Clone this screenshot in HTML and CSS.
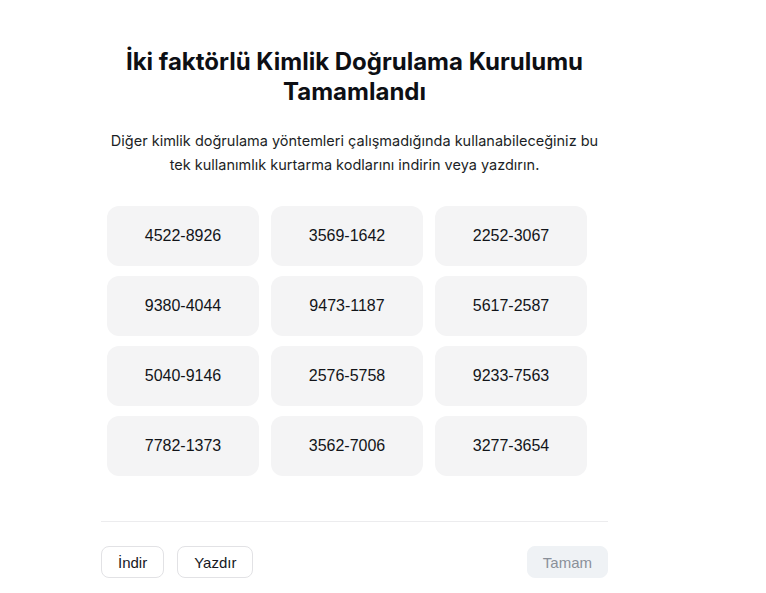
FILE: index.html
```html
<!DOCTYPE html>
<html lang="tr">
<head>
<meta charset="utf-8">
<link rel="stylesheet" href="styles.css">
</head>
<body>
<div class="panel">
  <h1 class="title">İki faktörlü Kimlik Doğrulama Kurulumu Tamamlandı</h1>
  <p class="desc">Diğer kimlik doğrulama yöntemleri çalışmadığında kullanabileceğiniz bu tek kullanımlık kurtarma kodlarını indirin veya yazdırın.</p>
  <div class="codes">
    <div class="code">4522-8926</div>
    <div class="code">3569-1642</div>
    <div class="code">2252-3067</div>
    <div class="code">9380-4044</div>
    <div class="code">9473-1187</div>
    <div class="code">5617-2587</div>
    <div class="code">5040-9146</div>
    <div class="code">2576-5758</div>
    <div class="code">9233-7563</div>
    <div class="code">7782-1373</div>
    <div class="code">3562-7006</div>
    <div class="code">3277-3654</div>
  </div>
  <div class="footer">
    <div class="left-actions">
      <button class="btn">İndir</button>
      <button class="btn">Yazdır</button>
    </div>
    <button class="btn btn-done">Tamam</button>
  </div>
</div>
</body>
</html>
```
FILE: styles.css
```css
html, body {
  margin: 0;
  padding: 0;
  background: #ffffff;
}
body {
  font-family: Inter, "Liberation Sans", sans-serif;
  color: #111318;
}
.panel {
  width: 507px;
  margin-left: 101px;
  padding-top: 47px;
}
.title {
  margin: 0;
  font-size: 24px;
  line-height: 30px;
  font-weight: 700;
  text-align: center;
  padding: 0 20px;
  color: #0d0f14;
}
.desc {
  margin: 22px 0 0;
  font-size: 14.5px;
  line-height: 24px;
  text-align: center;
  color: #1c1f26;
}
.codes {
  margin: 29px 0 0 6px;
  width: 480px;
  display: grid;
  grid-template-columns: repeat(3, 1fr);
  column-gap: 12px;
  row-gap: 10px;
}
.code {
  height: 60px;
  border-radius: 12px;
  background: #f4f4f5;
  display: flex;
  align-items: center;
  justify-content: center;
  font-family: "Liberation Sans", Arial, sans-serif;
  font-size: 16px;
  color: #121419;
}
.footer {
  margin-top: 45px;
  border-top: 1px solid #ececee;
  padding-top: 24px;
  display: flex;
  justify-content: space-between;
  align-items: center;
}
.left-actions {
  display: flex;
  gap: 13px;
}
.btn {
  height: 32px;
  padding: 0 16px;
  border: 1px solid #e2e2e5;
  border-radius: 8px;
  background: #ffffff;
  font-family: "Liberation Sans", Arial, sans-serif;
  font-size: 15px;
  color: #16181d;
}
.btn-done {
  background: #eff2f5;
  border-color: #eff2f5;
  color: #8a9099;
  padding: 0 15px;
}
```
